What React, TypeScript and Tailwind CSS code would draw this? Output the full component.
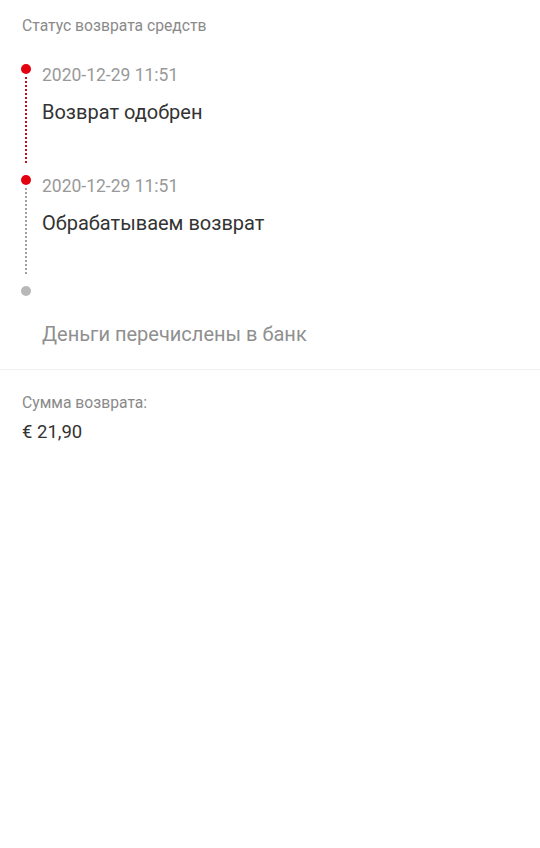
import React from 'react';

interface Step {
  date: string;
  title: string;
  done: boolean;
  lineDone?: boolean;
  last?: boolean;
}

const steps: Step[] = [
  { date: '2020-12-29 11:51', title: 'Возврат одобрен', done: true, lineDone: true },
  { date: '2020-12-29 11:51', title: 'Обрабатываем возврат', done: true, lineDone: false },
  { date: '', title: 'Деньги перечислены в банк', done: false, last: true },
];

const TimelineStep = ({ date, title, done, lineDone, last }: Step) => {
  return (
    <div className={last ? 'flex h-[83px]' : 'flex h-[111px]'}>
      <div className="flex w-[20px] flex-col items-center">
        <div className={done ? 'h-[10px] w-[10px] rounded-full bg-[#e3000f]' : 'h-[10px] w-[10px] rounded-full bg-[#b8b8b8]'} />
        {!last && (
          <div
            className={
              lineDone
                ? 'mt-[3px] mb-[12px] w-[1.5px] flex-1 bg-[repeating-linear-gradient(to_bottom,#c0101a_0,#c0101a_2px,transparent_2px,transparent_4px)]'
                : 'mt-[3px] mb-[11px] w-[1.5px] flex-1 bg-[repeating-linear-gradient(to_bottom,#a0a0a0_0,#a0a0a0_2px,transparent_2px,transparent_4px)]'
            }
          />
        )}
      </div>
      <div className="pl-[6px] pt-[1px]">
        <div className="h-[20px] text-[17.5px] leading-[20px] text-[#999999]">{date}</div>
        <div className={done ? 'mt-[15px] text-[20px] leading-[24px] text-[#333333]' : 'mt-[15px] text-[20px] leading-[24px] text-[#8f8f8f]'}>
          {title}
        </div>
      </div>
    </div>
  );
};

export default function App() {
  return (
    <div className="min-h-[848px] bg-white font-['Roboto',sans-serif]">
      <div className="px-[16px] pt-[16px]">
        <div className="pl-[6px] text-[15.7px] leading-[20px] text-[#8a8a8a]">Статус возврата средств</div>
        <div className="mt-[28px]">
          {steps.map((s, i) => (
            <TimelineStep key={i} {...s} />
          ))}
        </div>
      </div>
      <div className="h-px bg-[#f0f0f0]" />
      <div className="px-[22px] pt-[23px]">
        <div className="text-[15.7px] leading-[20px] text-[#8a8a8a]">Сумма возврата:</div>
        <div className="mt-[7px] text-[18.5px] leading-[24px] text-[#333333]">€ 21,90</div>
      </div>
    </div>
  );
}
